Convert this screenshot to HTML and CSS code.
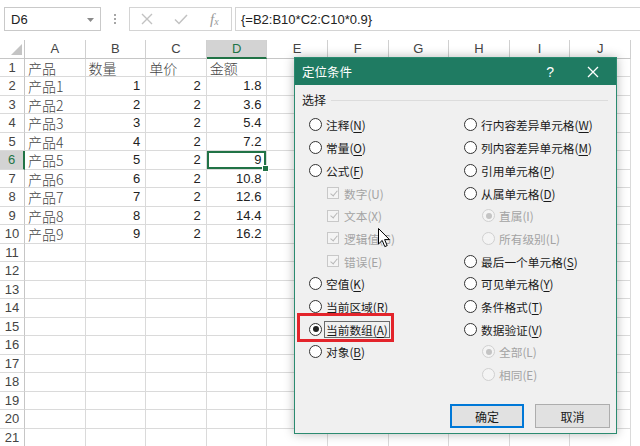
FILE: index.html
```html
<!DOCTYPE html>
<html lang="zh-CN">
<head>
<meta charset="utf-8">
<title>定位条件</title>
<link rel="stylesheet" href="styles.css">
</head>
<body>
<div class="app">
  <div class="fbar">
    <div class="namebox"><span>D6</span>
      <svg class="caret" width="7" height="4" viewBox="0 0 7 4"><path d="M0 0h7L3.5 4z" fill="#8a8a8a"/></svg>
    </div>
    <div class="dots"><i></i><i></i><i></i></div>
    <div class="fbtns">
      <svg width="14" height="14" viewBox="0 0 14 14"><path d="M2 2L12 12M12 2L2 12" stroke="#c2c2c2" stroke-width="1.4" fill="none"/></svg>
      <svg width="16" height="14" viewBox="0 0 16 14"><path d="M2 7.5L6 11.5L14 3" stroke="#c2c2c2" stroke-width="1.5" fill="none"/></svg>
      <span class="fx">f<sub>x</sub></span>
    </div>
    <div class="finput">{=B2:B10*C2:C10*0.9}</div>
  </div>

  <div class="sheet">
    <div class="row hdr">
      <div class="rh corner"><svg width="11" height="11" viewBox="0 0 11 11"><path d="M11 0V11H0z" fill="#c4c4c4"/></svg></div>
      <div class="c">A</div><div class="c">B</div><div class="c">C</div><div class="c on">D</div><div class="c">E</div><div class="c">F</div><div class="c">G</div><div class="c">H</div><div class="c">I</div><div class="c">J</div>
    </div>
    <div class="row"><div class="rh">1</div><div class="c t">产品</div><div class="c t">数量</div><div class="c t">单价</div><div class="c t">金额</div><div class="c"></div><div class="c"></div><div class="c"></div><div class="c"></div><div class="c"></div><div class="c"></div></div>
    <div class="row"><div class="rh">2</div><div class="c t">产品1</div><div class="c n">1</div><div class="c n">2</div><div class="c n">1.8</div><div class="c"></div><div class="c"></div><div class="c"></div><div class="c"></div><div class="c"></div><div class="c"></div></div>
    <div class="row"><div class="rh">3</div><div class="c t">产品2</div><div class="c n">2</div><div class="c n">2</div><div class="c n">3.6</div><div class="c"></div><div class="c"></div><div class="c"></div><div class="c"></div><div class="c"></div><div class="c"></div></div>
    <div class="row"><div class="rh">4</div><div class="c t">产品3</div><div class="c n">3</div><div class="c n">2</div><div class="c n">5.4</div><div class="c"></div><div class="c"></div><div class="c"></div><div class="c"></div><div class="c"></div><div class="c"></div></div>
    <div class="row"><div class="rh">5</div><div class="c t">产品4</div><div class="c n">4</div><div class="c n">2</div><div class="c n">7.2</div><div class="c"></div><div class="c"></div><div class="c"></div><div class="c"></div><div class="c"></div><div class="c"></div></div>
    <div class="row"><div class="rh on">6</div><div class="c t">产品5</div><div class="c n">5</div><div class="c n">2</div><div class="c n sel">9</div><div class="c"></div><div class="c"></div><div class="c"></div><div class="c"></div><div class="c"></div><div class="c"></div></div>
    <div class="row"><div class="rh">7</div><div class="c t">产品6</div><div class="c n">6</div><div class="c n">2</div><div class="c n">10.8</div><div class="c"></div><div class="c"></div><div class="c"></div><div class="c"></div><div class="c"></div><div class="c"></div></div>
    <div class="row"><div class="rh">8</div><div class="c t">产品7</div><div class="c n">7</div><div class="c n">2</div><div class="c n">12.6</div><div class="c"></div><div class="c"></div><div class="c"></div><div class="c"></div><div class="c"></div><div class="c"></div></div>
    <div class="row"><div class="rh">9</div><div class="c t">产品8</div><div class="c n">8</div><div class="c n">2</div><div class="c n">14.4</div><div class="c"></div><div class="c"></div><div class="c"></div><div class="c"></div><div class="c"></div><div class="c"></div></div>
    <div class="row"><div class="rh">10</div><div class="c t">产品9</div><div class="c n">9</div><div class="c n">2</div><div class="c n">16.2</div><div class="c"></div><div class="c"></div><div class="c"></div><div class="c"></div><div class="c"></div><div class="c"></div></div>
    <div class="row"><div class="rh">11</div><div class="c"></div><div class="c"></div><div class="c"></div><div class="c"></div><div class="c"></div><div class="c"></div><div class="c"></div><div class="c"></div><div class="c"></div><div class="c"></div></div>
    <div class="row"><div class="rh">12</div><div class="c"></div><div class="c"></div><div class="c"></div><div class="c"></div><div class="c"></div><div class="c"></div><div class="c"></div><div class="c"></div><div class="c"></div><div class="c"></div></div>
    <div class="row"><div class="rh">13</div><div class="c"></div><div class="c"></div><div class="c"></div><div class="c"></div><div class="c"></div><div class="c"></div><div class="c"></div><div class="c"></div><div class="c"></div><div class="c"></div></div>
    <div class="row"><div class="rh">14</div><div class="c"></div><div class="c"></div><div class="c"></div><div class="c"></div><div class="c"></div><div class="c"></div><div class="c"></div><div class="c"></div><div class="c"></div><div class="c"></div></div>
    <div class="row"><div class="rh">15</div><div class="c"></div><div class="c"></div><div class="c"></div><div class="c"></div><div class="c"></div><div class="c"></div><div class="c"></div><div class="c"></div><div class="c"></div><div class="c"></div></div>
    <div class="row"><div class="rh">16</div><div class="c"></div><div class="c"></div><div class="c"></div><div class="c"></div><div class="c"></div><div class="c"></div><div class="c"></div><div class="c"></div><div class="c"></div><div class="c"></div></div>
    <div class="row"><div class="rh">17</div><div class="c"></div><div class="c"></div><div class="c"></div><div class="c"></div><div class="c"></div><div class="c"></div><div class="c"></div><div class="c"></div><div class="c"></div><div class="c"></div></div>
    <div class="row"><div class="rh">18</div><div class="c"></div><div class="c"></div><div class="c"></div><div class="c"></div><div class="c"></div><div class="c"></div><div class="c"></div><div class="c"></div><div class="c"></div><div class="c"></div></div>
    <div class="row"><div class="rh">19</div><div class="c"></div><div class="c"></div><div class="c"></div><div class="c"></div><div class="c"></div><div class="c"></div><div class="c"></div><div class="c"></div><div class="c"></div><div class="c"></div></div>
    <div class="row"><div class="rh">20</div><div class="c"></div><div class="c"></div><div class="c"></div><div class="c"></div><div class="c"></div><div class="c"></div><div class="c"></div><div class="c"></div><div class="c"></div><div class="c"></div></div>
    <div class="row"><div class="rh">21</div><div class="c"></div><div class="c"></div><div class="c"></div><div class="c"></div><div class="c"></div><div class="c"></div><div class="c"></div><div class="c"></div><div class="c"></div><div class="c"></div></div>
  </div>

  <div class="dialog">
    <div class="dtitle">
      <span class="dname">定位条件</span>
      <span class="help">?</span>
      <svg class="close" width="12" height="12" viewBox="0 0 12 12"><path d="M1 1L11 11M11 1L1 11" stroke="#fff" stroke-width="1.3" fill="none"/></svg>
    </div>
    <div class="group"><span>选择</span><i class="gline"></i></div>
    <div class="opts">
      <div class="col">
        <div class="opt"><span class="radio"></span>注释(<u>N</u>)</div>
        <div class="opt"><span class="radio"></span>常量(<u>O</u>)</div>
        <div class="opt"><span class="radio"></span>公式(<u>F</u>)</div>
        <div class="opt sub dis"><span class="check"></span>数字(U)</div>
        <div class="opt sub dis"><span class="check"></span>文本(X)</div>
        <div class="opt sub dis"><span class="check"></span>逻辑值(G)</div>
        <div class="opt sub dis"><span class="check"></span>错误(E)</div>
        <div class="opt"><span class="radio"></span>空值(<u>K</u>)</div>
        <div class="opt"><span class="radio"></span>当前区域(<u>R</u>)</div>
        <div class="opt mark"><span class="radio on"></span><span class="focus">当前数组(<u>A</u>)</span></div>
        <div class="opt"><span class="radio"></span>对象(<u>B</u>)</div>
      </div>
      <div class="col">
        <div class="opt"><span class="radio"></span>行内容差异单元格(<u>W</u>)</div>
        <div class="opt"><span class="radio"></span>列内容差异单元格(<u>M</u>)</div>
        <div class="opt"><span class="radio"></span>引用单元格(<u>P</u>)</div>
        <div class="opt"><span class="radio"></span>从属单元格(<u>D</u>)</div>
        <div class="opt sub dis"><span class="radio on"></span>直属(I)</div>
        <div class="opt sub dis"><span class="radio"></span>所有级别(L)</div>
        <div class="opt"><span class="radio"></span>最后一个单元格(<u>S</u>)</div>
        <div class="opt"><span class="radio"></span>可见单元格(<u>Y</u>)</div>
        <div class="opt"><span class="radio"></span>条件格式(<u>T</u>)</div>
        <div class="opt"><span class="radio"></span>数据验证(<u>V</u>)</div>
        <div class="opt sub dis"><span class="radio on"></span>全部(L)</div>
        <div class="opt sub dis"><span class="radio"></span>相同(E)</div>
      </div>
    </div>
    <div class="btns">
      <button class="btn def">确定</button>
      <button class="btn">取消</button>
    </div>
  </div>

  <svg class="cursor" width="13" height="20" viewBox="0 0 13 20"><path d="M0.5 0.5V16L4.2 12.4L6.8 18.6L9.2 17.6L6.6 11.6H11.5z" fill="#fff" stroke="#000" stroke-width="1"/></svg>
</div>
</body>
</html>
```
FILE: styles.css
```css
html, body {
  margin: 0;
  padding: 0;
  background: #fff;
}
.app {
  position: relative;
  width: 640px;
  height: 446px;
  overflow: hidden;
  font-family: "Liberation Sans", "Noto Sans CJK SC", sans-serif;
}

/* formula bar */
.fbar {
  height: 40px;
  box-sizing: border-box;
  padding-top: 7px;
  display: flex;
  align-items: flex-start;
}
.namebox {
  margin-left: 4px;
  width: 97px;
  height: 24px;
  box-sizing: border-box;
  border: 1px solid #c9c9c9;
  display: flex;
  align-items: center;
  justify-content: space-between;
  padding: 0 6px 0 6px;
  font-size: 13px;
  color: #222;
}
.caret { margin-top: 1px; }
.dots {
  width: 28px;
  height: 24px;
  display: flex;
  flex-direction: column;
  align-items: center;
  justify-content: center;
  gap: 2px;
}
.dots i {
  display: block;
  width: 2px;
  height: 2px;
  background: #a6a6a6;
}
.fbtns {
  width: 103px;
  height: 24px;
  box-sizing: border-box;
  border: 1px solid #d4d4d4;
  display: flex;
  align-items: center;
  padding-left: 10px;
  gap: 19px;
}
.fx {
  font-family: "Liberation Serif", serif;
  font-style: italic;
  font-size: 15px;
  color: #9a9a9a;
  margin-left: 2px;
  line-height: 1;
}
.fx sub { font-size: 10px; vertical-align: -1px; }
.finput {
  margin-left: 3px;
  flex: 1;
  height: 24px;
  box-sizing: border-box;
  border: 1px solid #d4d4d4;
  border-right: none;
  padding-left: 5px;
  display: flex;
  align-items: center;
  font-size: 13px;
  color: #222;
}

/* sheet */
.sheet { width: 700px; }
.row {
  display: flex;
  height: 18.5px;
}
.rh {
  width: 25px;
  flex: none;
  box-sizing: border-box;
  border-right: 1px solid #c6c6c6;
  border-bottom: 1px solid #dadada;
  text-align: center;
  font-size: 13px;
  line-height: 18px;
  color: #444;
}
.rh.on {
  background: #d3d3d3;
  border-right: 2px solid #217346;
  color: #217346;
}
.corner {
  display: flex;
  align-items: flex-end;
  justify-content: flex-end;
  padding: 0 2px 3px 0;
  border-bottom: 1px solid #c6c6c6;
}
.c {
  width: 60.6px;
  flex: none;
  box-sizing: border-box;
  border-right: 1px solid #dadada;
  border-bottom: 1px solid #dadada;
  font-size: 13px;
  line-height: 18px;
  color: #222;
  white-space: nowrap;
  overflow: hidden;
}
.hdr .c {
  text-align: center;
  color: #444;
  border-right-color: #d0d0d0;
  border-bottom-color: #c6c6c6;
}
.hdr .c.on {
  background: #d3d3d3;
  border-bottom: 2px solid #217346;
  color: #217346;
}
.c.t {
  padding-left: 3px;
  font-family: "Noto Sans CJK SC", sans-serif;
  font-weight: 300;
  font-size: 14px;
  color: #444;
}
.c.n {
  text-align: right;
  padding-right: 5px;
}
.c.sel {
  position: relative;
  overflow: visible;
  box-shadow: inset 0 0 0 2px #217346;
}
.c.sel::after {
  content: "";
  position: absolute;
  right: -3px;
  bottom: -3px;
  width: 5px;
  height: 5px;
  background: #217346;
  border: 1px solid #fff;
}

/* dialog */
.dialog {
  position: absolute;
  left: 294px;
  top: 57px;
  width: 323px;
  height: 377px;
  box-sizing: border-box;
  border: 1px solid #2b8b70;
  background: #f0f0f0;
  box-shadow: 0 0 10px rgba(0, 0, 0, 0.28);
  font-family: "Noto Sans CJK SC", sans-serif;
  font-size: 11.7px;
  color: #1a1a1a;
  display: flex;
  flex-direction: column;
}
.dtitle {
  height: 27px;
  flex: none;
  background: #1f7b62;
  color: #fff;
  display: flex;
  align-items: center;
  padding-left: 7px;
}
.dname { font-size: 12.5px; flex: 1; }
.help {
  font-family: "Liberation Sans", sans-serif;
  font-size: 14px;
  margin-right: 33px;
}
.close { margin-right: 17px; }
.group {
  height: 28.6px;
  flex: none;
  display: flex;
  align-items: center;
  padding-left: 7px;
  padding-right: 8px;
  gap: 5px;
  font-size: 12px;
}
.gline {
  flex: 1;
  height: 1px;
  background: #dcdcdc;
  margin-top: 3px;
}
.opts {
  display: grid;
  grid-template-columns: 155px 1fr;
  padding-left: 14px;
}
.col { display: flex; flex-direction: column; }
.opt {
  height: 22.7px;
  display: flex;
  align-items: center;
  white-space: nowrap;
}
.opt u { text-underline-offset: 2px; }
.opt.sub { padding-left: 18px; }
.opt.dis { color: #a3a3a3; }
.radio {
  width: 13px;
  height: 13px;
  box-sizing: border-box;
  border: 1px solid #333;
  border-radius: 50%;
  background: #fff;
  margin-right: 4px;
  flex: none;
  position: relative;
}
.radio.on::after {
  content: "";
  position: absolute;
  left: 2.5px;
  top: 2.5px;
  width: 6px;
  height: 6px;
  border-radius: 50%;
  background: #222;
}
.dis .radio {
  border-color: #d0d0d0;
  background: #f4f4f4;
}
.dis .radio.on::after { background: #c4c4c4; }
.check {
  width: 12px;
  height: 12px;
  box-sizing: border-box;
  border: 1px solid #c8c8c8;
  background: #f4f4f4;
  margin-right: 5px;
  flex: none;
  position: relative;
}
.check::after {
  content: "";
  position: absolute;
  left: 3.5px;
  top: 0.5px;
  width: 3px;
  height: 6px;
  border-right: 1.2px solid #b8b8b8;
  border-bottom: 1.2px solid #b8b8b8;
  transform: rotate(40deg);
}
.mark { position: relative; }
.mark::after {
  content: "";
  position: absolute;
  left: -12px;
  top: -4.6px;
  width: 97px;
  height: 29px;
  box-sizing: border-box;
  border: 3px solid #e3242b;
}
.focus {
  border: 1px solid #6a6a6a;
  padding: 0 1px;
  margin-left: -2px;
  line-height: 15px;
}
.btns {
  margin-top: 18.5px;
  display: flex;
  justify-content: flex-end;
  gap: 11px;
  padding-right: 6px;
}
.btn {
  width: 75px;
  height: 24px;
  box-sizing: border-box;
  border: 1px solid #adadad;
  background: #e1e1e1;
  font-family: "Noto Sans CJK SC", sans-serif;
  font-size: 12px;
  color: #1a1a1a;
  padding: 0;
}
.btn.def {
  width: 74px;
  border: 2px solid #0078d7;
}

.cursor {
  position: absolute;
  left: 378px;
  top: 228px;
}
```
